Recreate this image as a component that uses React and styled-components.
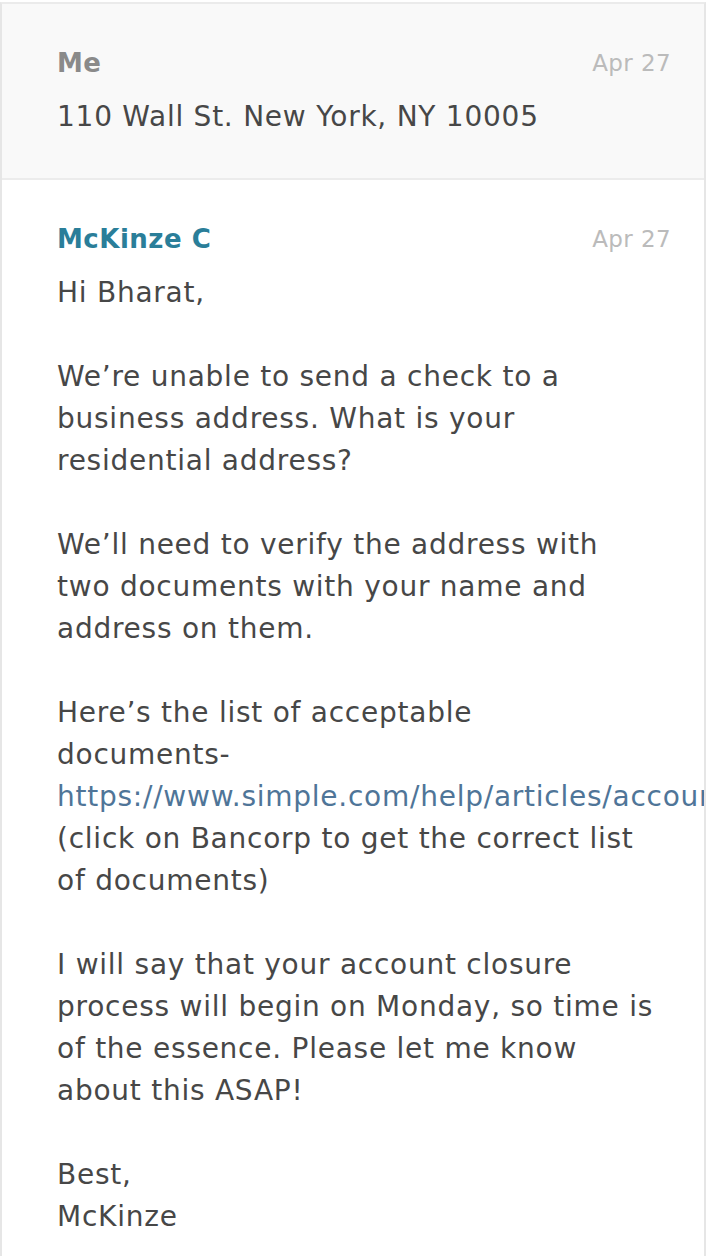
import styled, { createGlobalStyle } from 'styled-components';

const Global = createGlobalStyle`
  html, body { margin: 0; padding: 0; background: #fff; }
  body { font-family: "DejaVu Sans", "Open Sans", sans-serif; }
`;

const Thread = styled.div`
  width: 706px;
  box-sizing: border-box;
  margin-top: 2px;
  border-top: 2px solid #ebebeb;
  border-left: 2px solid #e6e6e6;
  border-right: 2px solid #e6e6e6;
  overflow: hidden;
  min-height: 1254px;
`;

const Message = styled.div`
  background: ${p => (p.mine ? '#f9f9f9' : '#fff')};
  border-bottom: ${p => (p.mine ? '2px solid #ececec' : 'none')};
  padding: 39px 33px ${p => (p.mine ? '40px' : '40px')} 55px;
`;

const Head = styled.div`
  display: flex;
  justify-content: space-between;
  align-items: center;
  height: 40px;
  margin-bottom: 13px;
`;

const Sender = styled.span`
  font-size: 26px;
  font-weight: 700;
  letter-spacing: 0.5px;
  color: ${p => (p.mine ? '#8a8a8a' : '#2a7e99')};
`;

const Time = styled.span`
  font-size: 23px;
  letter-spacing: 0.4px;
  color: #bbbbbb;
`;

const Body = styled.div`
  font-size: 28px;
  letter-spacing: 0.75px;
  line-height: 42px;
  color: #474747;
  white-space: nowrap;
`;

const Para = styled.p`
  margin: 0 0 42px;
  &:last-child { margin-bottom: 0; }
`;

const Link = styled.a`
  color: #4f7598;
  text-decoration: none;
`;

export default function App() {
  return (
    <>
      <Global />
      <Thread>
        <Message mine>
          <Head>
            <Sender mine>Me</Sender>
            <Time>Apr 27</Time>
          </Head>
          <Body>110 Wall St. New York, NY 10005</Body>
        </Message>
        <Message>
          <Head>
            <Sender>McKinze C</Sender>
            <Time>Apr 27</Time>
          </Head>
          <Body>
            <Para>Hi Bharat,</Para>
            <Para>
              We’re unable to send a check to a<br />
              business address. What is your<br />
              residential address?
            </Para>
            <Para>
              We’ll need to verify the address with<br />
              two documents with your name and<br />
              address on them.
            </Para>
            <Para>
              Here’s the list of acceptable<br />
              documents-<br />
              <Link href="#">https://www.simple.com/help/articles/account-closure-documents</Link><br />
              (click on Bancorp to get the correct list<br />
              of documents)
            </Para>
            <Para>
              I will say that your account closure<br />
              process will begin on Monday, so time is<br />
              of the essence. Please let me know<br />
              about this ASAP!
            </Para>
            <Para>
              Best,<br />
              McKinze
            </Para>
          </Body>
        </Message>
      </Thread>
    </>
  );
}
